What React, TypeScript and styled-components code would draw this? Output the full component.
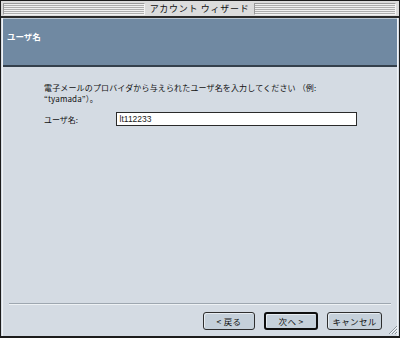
import React from 'react'
import styled, { createGlobalStyle } from 'styled-components'

const Global = createGlobalStyle`
  html, body {
    margin: 0;
    padding: 0;
    background: #d4dbe3;
  }
  body {
    font-family: "Noto Sans CJK JP", "Liberation Sans", sans-serif;
  }
`

const Window = styled.div`
  position: relative;
  box-sizing: border-box;
  width: 400px;
  height: 338px;
  display: flex;
  flex-direction: column;
  border: 1px solid #1c1c1c;
  border-bottom-width: 2px;
  background: #d4dbe3;
  overflow: hidden;
`

const TitleBar = styled.div`
  box-sizing: border-box;
  height: 17px;
  display: flex;
  align-items: center;
  padding: 1px 3px 1px 2px;
  background: #dcdcdc;
  border-bottom: 2px solid #2a2a2a;
`

const Stripes = styled.div`
  flex: 1;
  height: 12px;
  box-sizing: border-box;
  border-top: 1px solid #9a9a9a;
  border-left: 1px solid #9a9a9a;
  border-right: 1px solid #f4f4f4;
  border-bottom: 1px solid #f4f4f4;
  background: repeating-linear-gradient(
    to bottom,
    #f0f0f0 0px,
    #f0f0f0 1px,
    #aeaeae 1px,
    #aeaeae 2px
  );
`

const Title = styled.div`
  padding: 0 5px;
  font-size: 9px;
  letter-spacing: 0.7px;
  line-height: 12px;
  color: #111;
`

const Frame = styled.div`
  flex: 1;
  display: flex;
  flex-direction: column;
  border-left: 1px solid #f0f3f6;
  border-right: 1px solid #f0f3f6;
  margin: 0 1px;
`

const Header = styled.div`
  box-sizing: border-box;
  height: 49px;
  padding: 11px 0 0 4px;
  background: #7089a2;
  border-top: 1px solid #b9c6d2;
  border-bottom: 2px solid #34404c;
  color: #fff;
  font-size: 8.5px;
  font-weight: bold;
`

const Content = styled.div`
  flex: 1;
  padding: 15px 40px 0 41px;
  font-size: 8px;
  color: #111;
`

const Description = styled.p`
  margin: 0;
  line-height: 11px;
  letter-spacing: 0.15px;
  width: 290px;
`

const FieldRow = styled.div`
  display: flex;
  align-items: center;
  margin-top: 8px;
`

const Label = styled.label`
  width: 72px;
`

const TextInput = styled.div`
  box-sizing: border-box;
  width: 243px;
  height: 14px;
  padding-left: 3px;
  background: #fff;
  border: 1px solid #2a2a2a;
  font-family: "Liberation Sans", sans-serif;
  font-size: 8.5px;
  line-height: 12px;
  color: #222;
`

const Separator = styled.div`
  margin: 0 6px;
  height: 1px;
  background: #9ea7b0;
  border-bottom: 1px solid #eef2f5;
`

const ButtonRow = styled.div`
  display: flex;
  justify-content: flex-end;
  gap: 9px;
  padding: 7px 15px 6px 0;
`

const Button = styled.div<{ $default?: boolean; $width: number }>`
  box-sizing: border-box;
  width: ${p => p.$width}px;
  height: 18px;
  display: flex;
  align-items: center;
  justify-content: center;
  background: #c5d0da;
  border: ${p => (p.$default ? '2px solid #0e0e0e' : '1px solid #2e2e2e')};
  border-radius: 3px;
  box-shadow: inset 1px 1px 0 #e6ecf1;
  font-size: 8.5px;
  letter-spacing: 0.3px;
  color: #111;
`

const Grip = styled.svg`
  position: absolute;
  right: 1px;
  bottom: 1px;
`

export default function App() {
  return (
    <>
      <Global />
      <Window>
        <TitleBar>
          <Stripes />
          <Title>アカウント ウィザード</Title>
          <Stripes />
        </TitleBar>
        <Frame>
          <Header>ユーザ名</Header>
          <Content>
            <Description>
              電子メールのプロバイダから与えられたユーザ名を入力してください （例:
              “tyamada”）。
            </Description>
            <FieldRow>
              <Label>ユーザ名:</Label>
              <TextInput>lt112233</TextInput>
            </FieldRow>
          </Content>
          <Separator />
          <ButtonRow>
            <Button $width={52}>&lt; 戻る</Button>
            <Button $width={54} $default>次へ &gt;</Button>
            <Button $width={55}>キャンセル</Button>
          </ButtonRow>
        </Frame>
        <Grip width="11" height="11" viewBox="0 0 11 11">
          <path d="M10 2 L2 10 M10 5 L5 10 M10 8 L8 10" stroke="#8a939c" strokeWidth="1" />
          <path d="M10 3 L3 10 M10 6 L6 10 M10 9 L9 10" stroke="#f4f6f8" strokeWidth="1" />
        </Grip>
      </Window>
    </>
  )
}
